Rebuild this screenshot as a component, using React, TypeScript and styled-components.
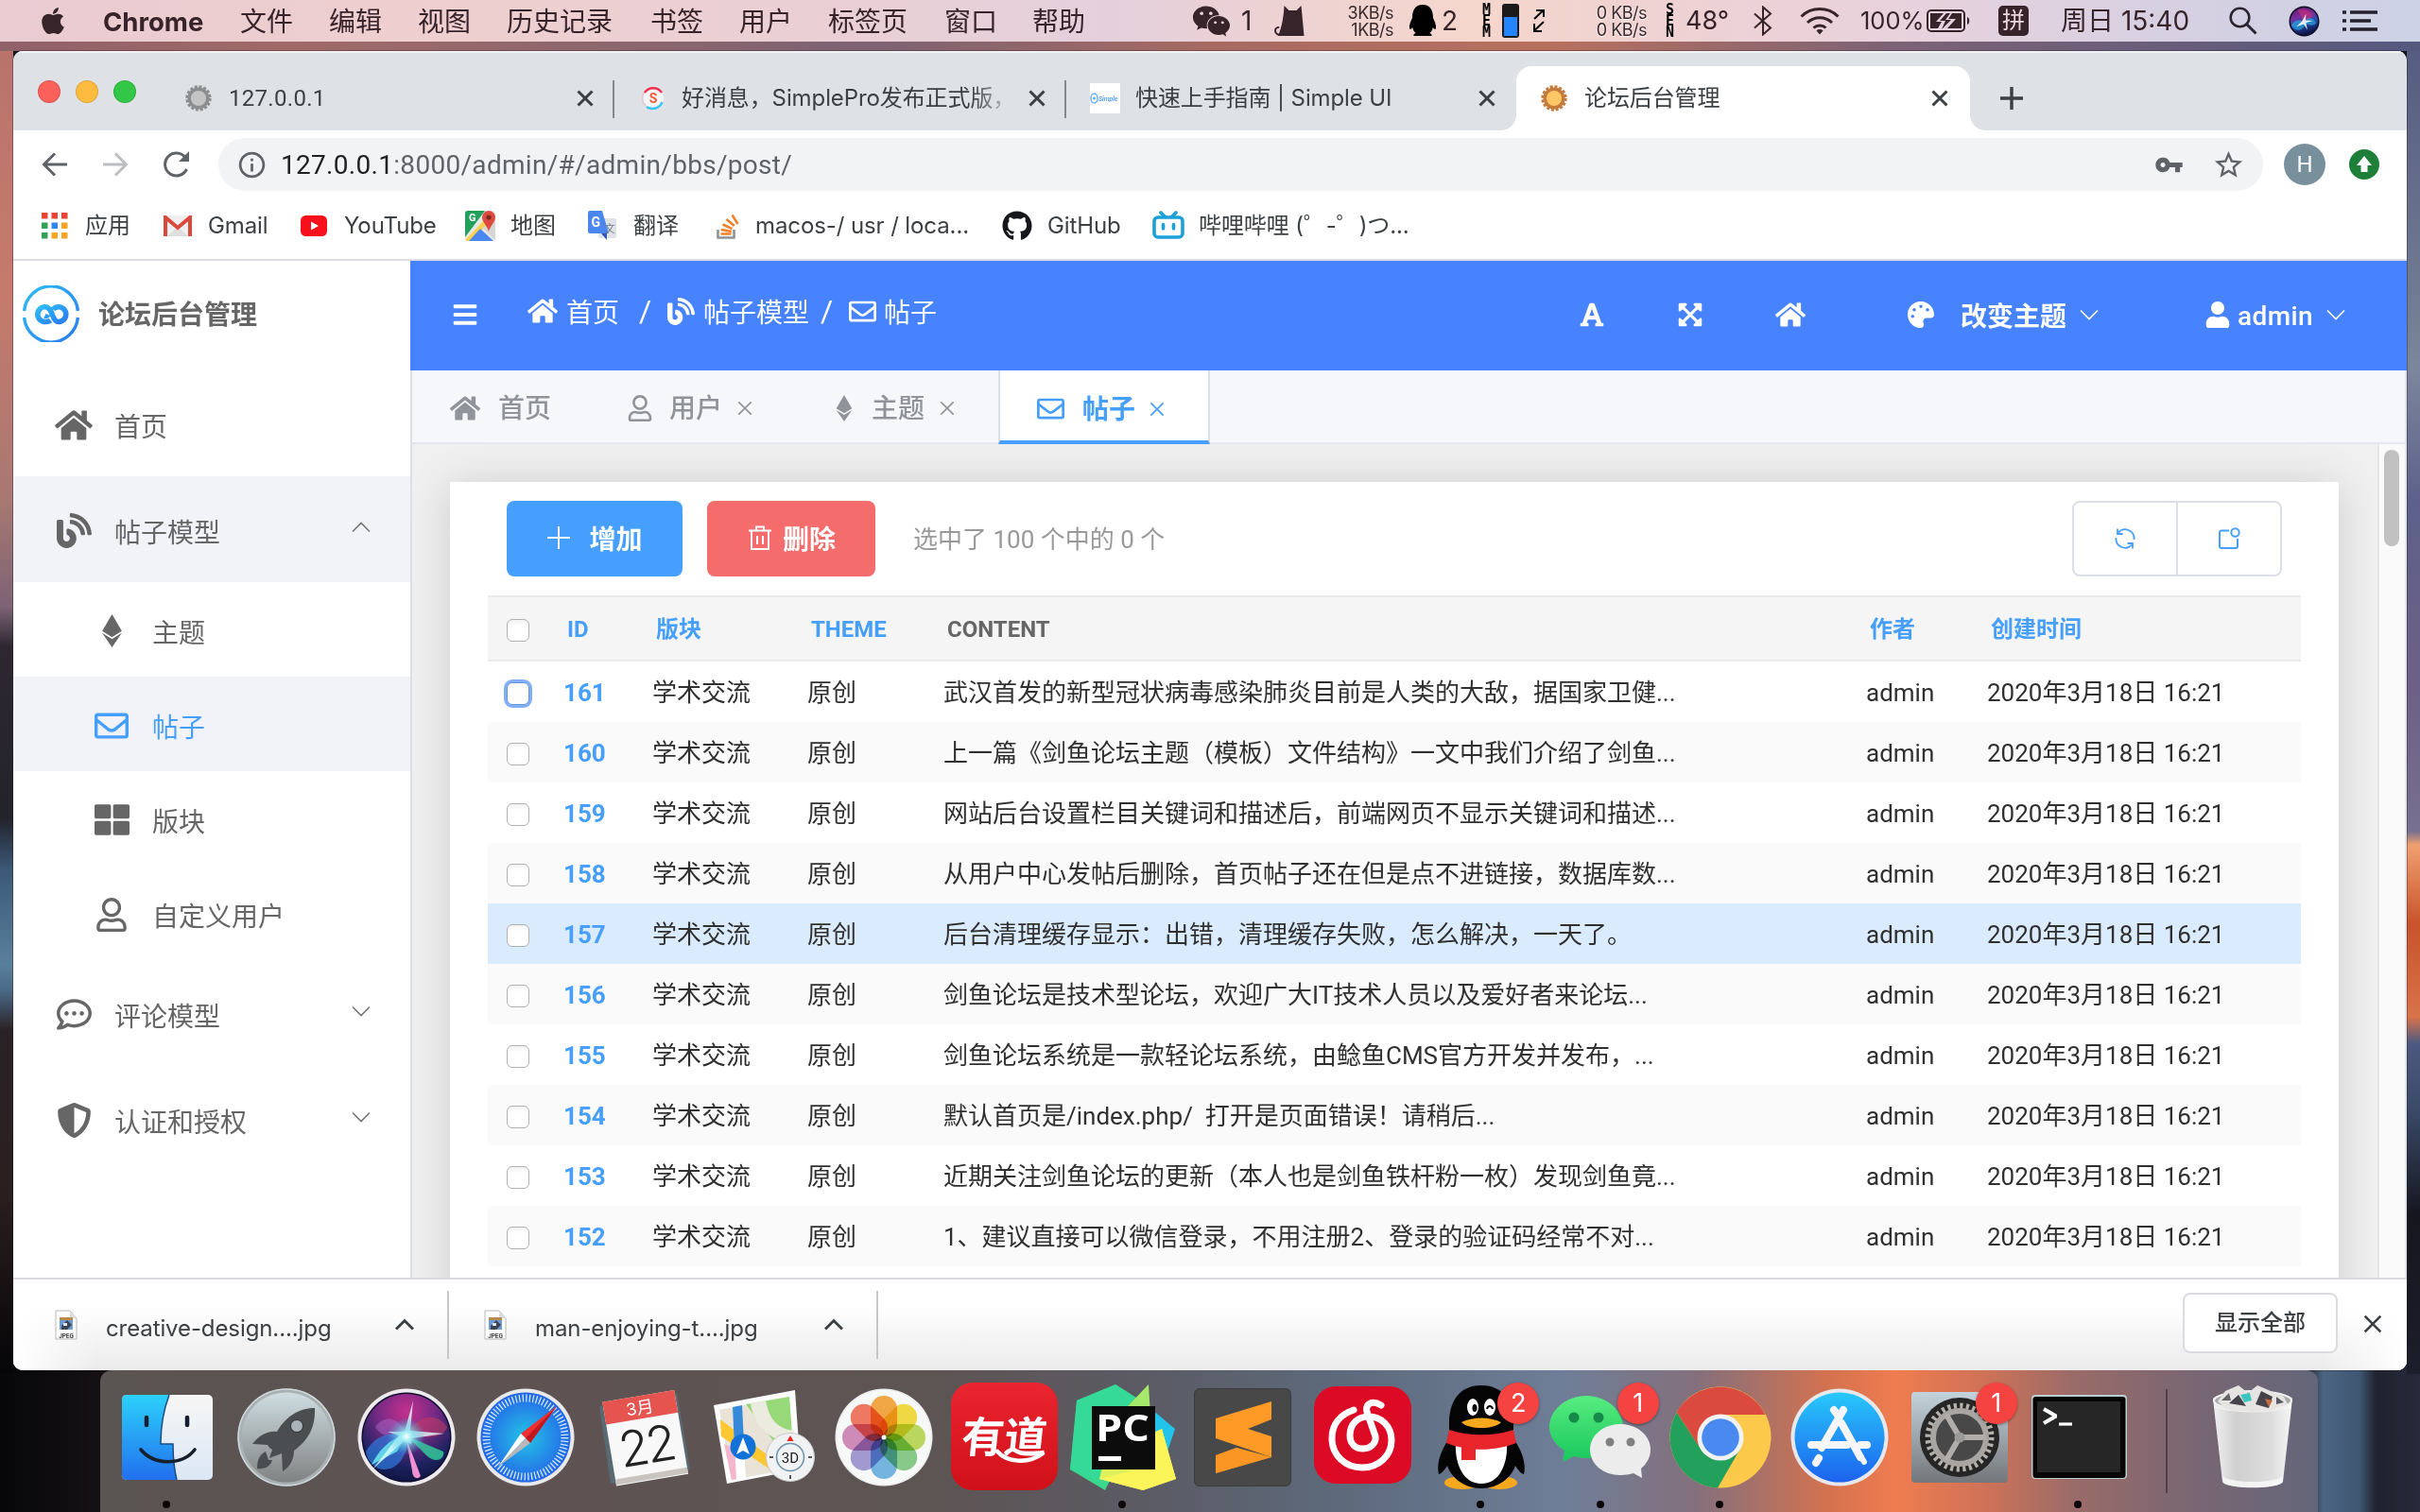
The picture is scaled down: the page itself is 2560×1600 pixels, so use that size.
import React from "react";
import styled, { createGlobalStyle, css } from "styled-components";
import {
  FaApple, FaBars, FaBlog, FaEthereum, FaExpandArrowsAlt, FaFont, FaGithub, FaHome, FaPalette,
  FaRegCommentDots, FaRegEnvelope, FaRegUser, FaShieldAlt, FaThLarge, FaUser, FaWeixin,
} from "react-icons/fa";
import { MdInfoOutline, MdStarBorder, MdVpnKey } from "react-icons/md";

const UI = `Roboto, "Noto Sans CJK SC", sans-serif`;
const SYS = `Inter, "Noto Sans CJK SC", sans-serif`;

const Global = createGlobalStyle`
  * { box-sizing: border-box; }
  body { margin: 0; font-family: ${UI}; overflow: hidden; }
  svg { display: block; flex: none; }
`;

/* ---------- desktop ---------- */

const Desktop = styled.div`
  width: 2560px;
  height: 1600px;
  display: flex;
  flex-direction: column;
  overflow: hidden;
  background:
    linear-gradient(90deg, #8f6068 0, #a06a68 12%, #7d6272 36%, #a66a62 50%, #b8705e 64%, #7d6275 78%, #55597f 100%) 0 0 / 100% 54px no-repeat,
    linear-gradient(180deg, #b9736c 0, #c67a6c 18%, #a87872 34%, #7c6375 42%, #2d2730 45%, #23232c 58%, #3c5a78 62%, #5a7f9c 69%, #4a6a86 71%, #2a2226 74%, #2c1f20 86%, #050507 100%) 0 54px / 14px 1400px no-repeat,
    linear-gradient(180deg, #565c80 0, #6f7a92 18%, #7c869c 24%, #5d618a 34%, #6d5f85 48%, #77708f 59%, #f0a070 60%, #c9532a 66%, #d8734a 73%, #4d5a80 75%, #3a4a68 80%, #16161f 88%, #1c1e2b 100%) 2546px 54px / 14px 1400px no-repeat,
    linear-gradient(90deg, #07070a 0, #141013 4%, #0b0a0d 95%, #4c6582 96%, #3e5672 97.5%, #20222e 98.2%, #262a3a 100%) 0 1440px / 100% 160px no-repeat,
    #14141c;
`;

const MenuBar = styled.header`
  height: 44px;
  flex: none;
  display: flex;
  align-items: center;
  justify-content: space-between;
  color: #37232a;
  font: 400 28px ${SYS};
  white-space: nowrap;
  background: linear-gradient(90deg, #e9cbd1 0, #efcfcf 18%, #e9d0d6 36%, #e4cfdb 46%, #ecd2d4 52%, #f5d6cc 61%, #efd2d2 68%, #e9d2dc 78%, #d6d0e2 90%, #cdd2e6 100%);
`;

const MenuGroup = styled.div<{ $pad?: string }>`
  display: flex;
  align-items: center;
  height: 44px;
  padding: ${(p) => p.$pad ?? "0"};
`;

const MenuItem = styled.span<{ $w: number; $bold?: boolean }>`
  width: ${(p) => p.$w}px;
  flex: none;
  line-height: 44px;
  padding-top: 1px;
  font-weight: ${(p) => (p.$bold ? 700 : 400)};
  font-size: ${(p) => (p.$bold ? 27.5 : 28)}px;
`;

const StatusSlot = styled.span<{ $w: number; $size?: number }>`
  width: ${(p) => p.$w}px;
  flex: none;
  height: 44px;
  display: flex;
  align-items: center;
  font-size: ${(p) => p.$size ?? 28}px;
  line-height: 44px;
`;

const Speed = styled.span<{ $w: number; $shadow?: boolean }>`
  width: ${(p) => p.$w}px;
  flex: none;
  display: grid;
  font-size: 18px;
  line-height: 18px;
  padding-top: 1px;
  color: #3a2a2e;
  text-shadow: ${(p) => (p.$shadow ? "0 1px 2px #fff" : "none")};
  span { width: 60px; text-align: right; letter-spacing: -0.5px; }
`;

const Vertical = styled.span<{ $w: number }>`
  width: ${(p) => p.$w}px;
  flex: none;
  display: grid;
  font: 700 15px/12px "DejaVu Sans Mono", monospace;
  color: #000;
`;

const InputBadge = styled.span`
  width: 32px;
  height: 32px;
  border-radius: 5px;
  background: #37232a;
  color: #ecd5dc;
  display: flex;
  align-items: center;
  justify-content: center;
  font-size: 24px;
  line-height: 32px;
`;

/* ---------- browser window ---------- */

const Window = styled.main`
  margin: 10px 14px 0;
  height: 1396px;
  flex: none;
  display: flex;
  flex-direction: column;
  background: #fff;
  border-radius: 10px;
  overflow: hidden;
  box-shadow: 0 0 0 1px rgba(30, 20, 30, 0.35);
`;

const TabStrip = styled.div`
  height: 84px;
  flex: none;
  display: flex;
  align-items: flex-end;
  background: #dee1e6;
  border-top: 2px solid #f0f2f4;
`;

const Lights = styled.div`
  width: 155px;
  height: 82px;
  display: flex;
  gap: 16px;
  padding: 29px 0 0 26px;
`;

const Light = styled.i<{ $c: string }>`
  width: 24px;
  height: 24px;
  border-radius: 50%;
  background: ${(p) => p.$c};
  box-shadow: inset 0 0 0 1px rgba(0, 0, 0, 0.12);
`;

const Tab = styled.div<{ $active?: boolean; $sep?: boolean; $w: number }>`
  position: relative;
  width: ${(p) => p.$w}px;
  height: 68px;
  flex: none;
  display: flex;
  align-items: center;
  padding: 0 22px 0 25px;
  color: #3c4043;
  font: 400 24px ${SYS};
  letter-spacing: -0.1px;
  ${(p) => p.$sep && css`
    &::after { content: ""; position: absolute; right: 0; top: 15px; width: 2px; height: 40px; background: #85898e; }
  `}
  ${(p) => p.$active && css`
    background: #fff;
    border-radius: 16px 16px 0 0;
    padding: 0 23px 0 24px;
    &::before, &::after {
      content: ""; position: absolute; bottom: 0; width: 16px; height: 16px;
    }
    &::before { left: -16px; background: radial-gradient(circle at 0 0, transparent 15.5px, #fff 16px); }
    &::after { right: -16px; background: radial-gradient(circle at 100% 0, transparent 15.5px, #fff 16px); }
  `}
`;

const TabIcon = styled.span`
  width: 32px;
  flex: none;
  display: flex;
  justify-content: center;
`;

const TabTitle = styled.span<{ $fade?: boolean; $digits?: boolean }>`
  flex: 1;
  margin: 0 10px 0 ${(p) => (p.$fade ? 14 : 16)}px;
  line-height: 40px;
  overflow: hidden;
  white-space: nowrap;
  ${(p) => p.$fade && css`mask-image: linear-gradient(90deg, #000 86%, transparent 99%);`}
  ${(p) => p.$digits && css`font-family: ${UI}; letter-spacing: 0.3px;`}
`;

const NewTab = styled.span`
  height: 68px;
  padding: 0 0 0 32px;
  display: flex;
  align-items: center;
`;

const Toolbar = styled.div`
  height: 72px;
  flex: none;
  display: flex;
  align-items: center;
  padding: 0 20px 0 30px;
`;

const NavButton = styled.span<{ $w: number }>`
  width: ${(p) => p.$w}px;
  flex: none;
  display: flex;
`;

const Omnibox = styled.div`
  width: 2163px;
  height: 56px;
  flex: none;
  border-radius: 28px;
  background: #f1f3f4;
  display: flex;
  align-items: center;
  padding: 0 19px 0 19px;
  color: #5f6368;
  font: 400 28px ${UI};
  letter-spacing: 0.3px;
  svg:first-child { margin-right: 14px; }
`;

const Url = styled.span`
  flex: 1;
  b { font-weight: 400; color: #202124; }
`;

const OmniActions = styled.span`
  display: flex;
  align-items: center;
  svg + svg { margin-left: 30px; }
  svg:first-child { margin-right: 0; }
`;

const Avatar = styled.span`
  margin: 0 25px 0 22px;
  width: 44px;
  height: 44px;
  border-radius: 50%;
  background: #78909c;
  color: #fff;
  font-size: 24px;
  line-height: 45px;
  text-align: center;
`;

const Bookmarks = styled.nav`
  height: 66px;
  flex: none;
  display: flex;
  align-items: center;
  padding: 0 0 7px 30px;
  border-bottom: 2px solid #dcdde2;
  font: 400 24px/32px ${SYS};
  letter-spacing: -0.1px;
  color: #3c4043;
`;

const Bookmark = styled.span<{ $w: number }>`
  width: ${(p) => p.$w}px;
  flex: none;
  display: flex;
  align-items: center;
  white-space: nowrap;
`;

const BookmarkIcon = styled.span<{ $w: number }>`
  width: ${(p) => p.$w}px;
  flex: none;
`;

/* ---------- admin page ---------- */

const Page = styled.div`
  height: 1076px;
  flex: none;
  display: flex;
  overflow: hidden;
`;

const Sidebar = styled.aside`
  width: 420px;
  flex: none;
  background: #fff;
  color: #666;
`;

const Brand = styled.div`
  height: 116px;
  display: flex;
  align-items: center;
  gap: 20px;
  padding: 0 0 4px 10px;
  font-size: 28px;
  font-weight: 700;
  > span { padding-bottom: 3px; }
`;

const NavRow = styled.div<{ $sub?: boolean; $fill?: boolean; $on?: boolean }>`
  height: ${(p) => (p.$sub ? 100 : 112)}px;
  display: flex;
  align-items: center;
  padding: 3px 42px 0 ${(p) => (p.$sub ? 80 : 40)}px;
  background: ${(p) => (p.$fill ? "#f1f3f8" : "transparent")};
  color: ${(p) => (p.$on ? "#469ffc" : "#666")};
  font-size: 28px;
`;

const NavIcon = styled.span`
  width: 48px;
  flex: none;
  display: flex;
  justify-content: center;
`;

const NavLabel = styled.span`
  flex: 1;
  padding: 1px 0 0 19px;
`;

const NavArrow = styled.span`
  padding-bottom: 8px;
  color: #777;
`;

const Content = styled.section`
  flex: 1;
  min-width: 0;
  display: flex;
  flex-direction: column;
`;

const TopBar = styled.div`
  height: 116px;
  flex: none;
  display: flex;
  align-items: center;
  justify-content: space-between;
  padding: 0 61px 2px 44px;
  background: #4783fe;
  color: #fff;
  font-size: 28px;
`;

const Crumbs = styled.div`
  display: flex;
  align-items: center;
  padding-bottom: 8px;
`;

const Burger = styled.span`
  width: 80px;
  padding-top: 8px;
`;

const Crumb = styled.span<{ $w: number; $icon: number }>`
  width: ${(p) => p.$w}px;
  flex: none;
  display: flex;
  align-items: center;
  white-space: nowrap;
  svg { margin-right: ${(p) => p.$icon}px; }
`;

const Slash = styled.span<{ $w: number }>`
  width: ${(p) => p.$w}px;
  flex: none;
  font-size: 32px;
`;

const Actions = styled.div`
  display: flex;
  align-items: center;
  font-weight: 700;
`;

const Action = styled.span<{ $w: number; $gap?: number }>`
  width: ${(p) => p.$w}px;
  flex: none;
  display: flex;
  align-items: center;
  gap: ${(p) => p.$gap ?? 0}px;
  white-space: nowrap;
`;

const ThemeLabel = styled.span`
  margin-left: 14px;
`;

const UserName = styled.span`
  font-weight: 500;
  letter-spacing: 0.4px;
  margin-right: 7px;
  padding-top: 2px;
`;

const PageTabs = styled.div`
  height: 78px;
  flex: none;
  display: flex;
  background: #f5f7fb;
  border-left: 2px solid #dcdfe6;
  border-right: 2px solid #dfe3ea;
  border-bottom: 2px solid #e4e7ed;
  color: #909399;
  font-size: 28px;
`;

const PageTab = styled.div<{ $w: number; $pad: number; $gap: number; $active?: boolean }>`
  width: ${(p) => p.$w}px;
  height: ${(p) => (p.$active ? 78 : 76)}px;
  display: flex;
  align-items: center;
  padding: 4px 0 0 ${(p) => p.$pad}px;
  font-weight: 500;
  > span { margin-left: ${(p) => p.$gap}px; padding-bottom: 4px; }
  > svg:last-child { margin: 0 0 0 16px; }
  ${(p) => p.$active && css`
    color: #469ffc;
    background: #fff;
    font-weight: 700;
    padding-top: 7px;
    border: solid #dcdfe6;
    border-width: 0 2px;
    border-bottom: 4px solid #469ffc;
    > svg:last-child { margin-left: 15px; }
  `}
`;

const Scroller = styled.div`
  flex: 1;
  min-height: 0;
  display: flex;
  background: #f0f0f0;
  border-left: 2px solid #dcdfe6;
`;

const Viewport = styled.div`
  flex: 1;
  height: 882px;
  padding: 40px 41px 0 40px;
  overflow: hidden;
`;

const Track = styled.div`
  width: 31px;
  background: #fafafa;
  border-left: 2px solid #e5e5e5;
  border-right: 2px solid #e2e4ea;
  padding: 6px 0 0 5px;
`;

const Thumb = styled.div`
  width: 16px;
  height: 102px;
  border-radius: 8px;
  background: #c1c1c1;
`;

const Card = styled.div`
  height: 1000px;
  background: #fff;
  padding: 20px 40px 0;
  box-shadow: 0 4px 44px rgba(0, 0, 0, 0.15);
`;

const ActionRow = styled.div`
  height: 80px;
  display: flex;
  align-items: center;
  padding: 0 20px;
`;

const Button = styled.button<{ $c: string; $w: number; $gap: number }>`
  width: ${(p) => p.$w}px;
  height: 80px;
  border: 0;
  border-radius: 8px;
  margin-right: 26px;
  padding: 0 0 2px 1px;
  background: ${(p) => p.$c};
  color: #fff;
  font: 700 28px ${UI};
  display: flex;
  align-items: center;
  justify-content: center;
  gap: ${(p) => p.$gap}px;
`;

const Selected = styled.span`
  flex: 1;
  margin-left: 14px;
  font-size: 26px;
  line-height: 32px;
  padding-top: 1px;
  color: #999;
`;

const ButtonGroup = styled.div`
  width: 222px;
  height: 80px;
  display: flex;
  border: 2px solid #dcdfe6;
  border-radius: 8px;
  color: #469ffc;
  span {
    flex: 1;
    display: flex;
    align-items: center;
    justify-content: center;
  }
  span + span { border-left: 2px solid #dcdfe6; }
`;

const Table = styled.div`
  margin-top: 20px;
`;

const Row = styled.div<{ $bg: string; $head?: boolean }>`
  display: grid;
  grid-template-columns: 80px 94px 164px 144px 976px 128px 1fr;
  align-items: center;
  height: ${(p) => (p.$head ? 70 : 64)}px;
  background: ${(p) => p.$bg};
  color: #303030;
  font-size: 26px;
  line-height: 32px;
  white-space: pre;
  > span { padding-top: 2px; }
  ${(p) => p.$head && css`
    border: solid #eaeaea;
    border-width: 2px 0;
    font-size: 24px;
    font-weight: 700;
    color: #666;
    > span { padding-left: 4px; }
  `}
`;

const Link = styled.span`
  color: #469ffc;
  font-weight: 700;
`;

const Check = styled.i<{ $focus?: boolean }>`
  width: 24px;
  height: 24px;
  margin: 3px 0 0 20px;
  border-radius: 6px;
  border: 1.5px solid #b0b0b0;
  background: linear-gradient(#f2f2f2, #fff 30%);
  ${(p) => p.$focus && css`
    border-color: #6c93d6;
    background: #fff;
    box-shadow: 0 0 0 3px #82b0f8;
  `}
`;

/* ---------- downloads ---------- */

const Downloads = styled.footer`
  height: 98px;
  flex: none;
  display: flex;
  align-items: center;
  border-top: 2px solid #d9d9de;
  background:
    linear-gradient(90deg, #fff 0, rgba(255,255,255,0) 90px, rgba(255,255,255,0) 2440px, #fff 100%),
    linear-gradient(180deg, #fff 30%, #f4f4f4 65%, #ebebeb 100%);
  font: 400 24px ${SYS};
  color: #3c4043;
`;

const Download = styled.div<{ $pad: number; $w: number }>`
  width: ${(p) => p.$w}px;
  height: 72px;
  display: flex;
  align-items: center;
  padding: 0 35px 1px ${(p) => p.$pad}px;
  border-right: 2px solid #c6c6c8;
  letter-spacing: -0.1px;
  > span { flex: 1; padding: 8px 0 0 30px; white-space: nowrap; }
`;

const ShowAll = styled.span`
  margin-left: auto;
  width: 164px;
  height: 64px;
  margin-top: -4px;
  border: 2px solid #dadce0;
  border-radius: 8px;
  background: #fff;
  font: 500 24px/60px ${UI};
  text-align: center;
`;

const CloseShelf = styled.span`
  padding: 0 26px 3px 27px;
`;

/* ---------- dock ---------- */

const Dock = styled.div`
  margin: 0 108px 0 106px;
  height: 150px;
  flex: none;
  display: flex;
  padding-left: 8px;
  border-radius: 12px 12px 0 0;
  background:
    linear-gradient(90deg, #5a5453 0, #5e5352 20%, #5d5454 38%, #5b5c66 48%, #5d6a7c 56%, #6f7e98 66%, #84707c 72%, #d5724f 78%, #ef7c50 81%, #cf7257 85%, #9a6b68 89%, #7b6672 94%, #63667a 100%);
`;

const DockSlot = styled.div<{ $w?: number }>`
  position: relative;
  width: ${(p) => p.$w ?? 126.4}px;
  height: 150px;
  flex: none;
`;

const Running = styled.i`
  position: absolute;
  left: 58px;
  top: 138px;
  width: 8px;
  height: 8px;
  border-radius: 50%;
  background: #0a0406;
`;

const Badge = styled.b`
  position: absolute;
  left: 80px;
  top: 13px;
  width: 44px;
  height: 44px;
  border-radius: 50%;
  background: #f44340;
  box-shadow: 0 1px 3px rgba(0, 0, 0, 0.4);
  color: #fff;
  font: 400 27px/44px ${SYS};
  text-align: center;
`;

const Divider = styled.i`
  width: 2px;
  height: 110px;
  margin: 20px 27px 0 28px;
  background: rgba(50, 35, 45, 0.6);
`;

/* ---------- small drawings ---------- */

const Cross = ({ s = 18, w = 3, c = "currentColor" }: { s?: number; w?: number; c?: string }) => (
  <svg width={s} height={s} viewBox="0 0 18 18" stroke={c} strokeWidth={w} fill="none"><path d="M1.5 1.5l15 15M16.5 1.5l-15 15" /></svg>
);

const Chevron = ({ up, w = 1.6, s = 20 }: { up?: boolean; w?: number; s?: number }) => (
  <svg width={s} height={s} viewBox="0 0 20 20" fill="none" stroke="currentColor" strokeWidth={w}>
    <path d={up ? "M1 14.5L10 5.5l9 9" : "M1 5.5l9 9 9-9"} />
  </svg>
);

const Gear = ({ ring, fill }: { ring: string; fill: string }) => (
  <svg width="30" height="30" viewBox="0 0 30 30">
    <circle cx="15" cy="15" r="12.2" fill="none" stroke={ring} strokeWidth="3" strokeDasharray="3 1.8" />
    <circle cx="15" cy="15" r="9.8" fill={fill} stroke={ring} strokeWidth="3.4" />
  </svg>
);

const Logo = () => (
  <svg width="60" height="60" viewBox="0 0 60 60" fill="none">
    <defs><linearGradient id="lg" x1="0" y1="0" x2="1" y2="1"><stop offset="0" stopColor="#2fbdf5" /><stop offset="1" stopColor="#2a7bf0" /></linearGradient></defs>
    <path d="M1.6 27a28.5 28.5 0 0 1 56.8 0M58.4 34a28.5 28.5 0 0 1-56.8 0" stroke="url(#lg)" strokeWidth="3.4" />
    <path d="M29.500 37C28 38.200 26 38.700 23.700 38.500a7.900 7.900 0 1 1 0-15.800c4.300 0 6 3.500 7.500 7.900s3.200 7.900 6.700 7.900a7.900 7.900 0 0 0 0-15.800c-2.600 0-4.600 1.100-5.800 2.800M23.500 32c1.200.6 2.600.2 3.200-1.200" stroke="url(#lg)" strokeWidth="5.600" />
  </svg>
);

const Jpeg = () => (
  <svg width="24" height="32" viewBox="0 0 24 32">
    <path d="M1 1h15l7 8v22H1z" fill="#fdfdfd" stroke="#b8b8b8" />
    <path d="M16 1v8h7z" fill="#ddd" />
    <rect x="5" y="8" width="14" height="13" fill="#6d9bd6" />
    <path d="M5 8h14v3H5z" fill="#b98a4e" /><path d="M7 17l6-6 5 5-5 5H7z" fill="#3c4250" /><path d="M9 14h4v3H9z" fill="#d4e4f4" />
    <text x="12" y="29.500" fontSize="6.500" fontWeight="700" textAnchor="middle" fill="#444" fontFamily="Roboto">JPEG</text>
  </svg>
);

const SiriBall = ({ size }: { size: number }) => (
  <svg width={size} height={size} viewBox="0 0 34 34">
    <defs>
      <linearGradient id="sb" x1="0" y1="0" x2=".3" y2="1"><stop offset="0" stopColor="#5a1c6c" /><stop offset=".4" stopColor="#7a2c9c" /><stop offset=".65" stopColor="#2450b0" /><stop offset="1" stopColor="#101850" /></linearGradient>
    </defs>
    <circle cx="17" cy="17" r="16.500" fill="#0c0a20" /><circle cx="17" cy="17" r="15" fill="url(#sb)" />
    <path d="M10 5c6-3 14 0 17 6-4 4-9 5-11 5z" fill="#c0307c" opacity=".7" />
    <path d="M3 22c4-8 8-6 14-5 6-6 10-4 13 2-4 4-8 2-12 0 0 6-8 12-15 3z" fill="#2fb4e4" opacity=".6" />
    <path d="M19 9l-.5 7 8 .5-7.500 2 1.500 8-4-6.500-8 3 6-6z" fill="#fff" opacity=".85" />
  </svg>
);

const bookmarkIcons = {
  apps: (
    <svg width="28" height="28" viewBox="0 0 28 28">
      {["#ea4335", "#ea4335", "#ea4335", "#34a05a", "#2f86f0", "#f5a623", "#34a05a", "#f5a623", "#f5a623"].map((c, i) => (
        <rect key={i} x={(i % 3) * 10.5} y={Math.floor(i / 3) * 10.500} width="6.500" height="6.500" fill={c} />
      ))}
    </svg>
  ),
  gmail: (
    <svg width="30" height="22" viewBox="0 0 30 22">
      <rect width="30" height="22" rx="2" fill="#efefef" /><path d="M4 22l11-10 11 10z" fill="#dedede" />
      <path d="M2 22V2l13 11L28 2v20" fill="none" stroke="#d94a3d" strokeWidth="4" />
    </svg>
  ),
  youtube: (
    <svg width="28" height="22" viewBox="0 0 28 22"><rect width="28" height="22" rx="5.500" fill="#f8101c" /><path d="M11 6.500v9l8-4.500z" fill="#fff" /></svg>
  ),
  maps: (
    <svg width="32" height="32" viewBox="0 0 32 32">
      <rect width="32" height="32" rx="3" fill="#e8e8e8" /><path d="M0 3a3 3 0 0 1 3-3h18L0 28z" fill="#23a05c" />
      <path d="M0 31L22 8l4 4L6 32H2z" fill="#fbd24c" /><path d="M4 32l12-13 14 13z" fill="#4a87f0" /><path d="M18 18l14 13V10z" fill="#d6d6d6" />
      <path d="M25 0a7 7 0 0 1 7 7c0 5-5 8-7 15-2-7-7-10-7-15a7 7 0 0 1 7-7z" fill="#dd4b3e" /><circle cx="25" cy="7" r="2.600" fill="#7c2b24" />
      <text x="4" y="11" fontSize="11" fontWeight="700" fill="#fff" fontFamily="Roboto">G</text>
    </svg>
  ),
  translate: (
    <svg width="31" height="31" viewBox="0 0 31 31">
      <rect x="11" y="8" width="19" height="21" rx="2" fill="#dfe2e6" /><path d="M14 24l6 7 0-7z" fill="#3057b5" />
      <path d="M2 0h13l7 24H2a2 2 0 0 1-2-2V2a2 2 0 0 1 2-2z" fill="#4b86ee" />
      <text x="3.500" y="17" fontSize="14" fontWeight="700" fill="#fff" fontFamily="Roboto">G</text>
      <text x="17.500" y="23" fontSize="11" fill="#6b7784" fontFamily="Noto Sans CJK SC">文</text>
    </svg>
  ),
  stack: (
    <svg width="24" height="28" viewBox="0 0 24 28" fill="none" strokeWidth="2.600">
      <path d="M1.500 18v8.500h17V18" stroke="#8f9499" /><path d="M4.500 22.500h11M4.800 18l11 2M6.500 12.500l10 4.600M10.500 7l8.300 7M16.500 2.500l6 9.500" stroke="#f0802a" />
    </svg>
  ),
  bili: (
    <svg width="34" height="32" viewBox="0 0 34 32" fill="none" stroke="#1ba0da" strokeWidth="3.600" strokeLinecap="round">
      <rect x="2" y="7" width="30" height="21" rx="4" /><path d="M9 2l4.500 4.500M25 2l-4.500 4.500M11.500 14.500v4.500M22.500 14.500v4.500" />
    </svg>
  ),
};

/* ---------- data ---------- */

const rows: [number, string][] = [
  [161, "武汉首发的新型冠状病毒感染肺炎目前是人类的大敌，据国家卫健..."],
  [160, "上一篇《剑鱼论坛主题（模板）文件结构》一文中我们介绍了剑鱼..."],
  [159, "网站后台设置栏目关键词和描述后，前端网页不显示关键词和描述..."],
  [158, "从用户中心发帖后删除，首页帖子还在但是点不进链接，数据库数..."],
  [157, "后台清理缓存显示：出错，清理缓存失败，怎么解决，一天了。"],
  [156, "剑鱼论坛是技术型论坛，欢迎广大IT技术人员以及爱好者来论坛..."],
  [155, "剑鱼论坛系统是一款轻论坛系统，由鲶鱼CMS官方开发并发布，..."],
  [154, "默认首页是/index.php/  打开是页面错误！请稍后..."],
  [153, "近期关注剑鱼论坛的更新（本人也是剑鱼铁杆粉一枚）发现剑鱼竟..."],
  [152, "1、建议直接可以微信登录，不用注册2、登录的验证码经常不对..."],
];

const menus: [string, number][] = [
  ["文件", 94], ["编辑", 94], ["视图", 94], ["历史记录", 152], ["书签", 94], ["用户", 94], ["标签页", 123], ["窗口", 93], ["帮助", 60],
];

/* ---------- dock drawings ---------- */

const Art = ({ children }: { children: React.ReactNode }) => (
  <svg width="126" height="150" viewBox="0 0 126 150">{children}</svg>
);

const Finder = () => (
  <Art>
    <defs>
      <linearGradient id="f1" x1="0" y1="0" x2="0" y2="1"><stop offset="0" stopColor="#2cd0fb" /><stop offset="1" stopColor="#2270ee" /></linearGradient>
      <linearGradient id="f2" x1="0" y1="0" x2="0" y2="1"><stop offset="0" stopColor="#f7f6f6" /><stop offset="1" stopColor="#dbe7f5" /></linearGradient>
    </defs>
    <rect x="15" y="26" width="96" height="90" rx="5" fill="url(#f2)" />
    <path d="M20 26h45c-6 16-9 32-9 52h13c0 13 1 26 4 38H20a5 5 0 0 1-5-5V31a5 5 0 0 1 5-5z" fill="url(#f1)" />
    <path d="M65 26c-6 16-9 32-9 52h13c0 13 1 26 4 38" fill="none" stroke="#1b4d80" strokeWidth="1.500" />
    <path d="M41 50v8M84 50v8" stroke="#16202c" strokeWidth="4.500" strokeLinecap="round" />
    <path d="M35 84c14 17 44 17 57 0" fill="none" stroke="#16202c" strokeWidth="3.600" strokeLinecap="round" />
  </Art>
);

const Launchpad = () => (
  <Art>
    <defs><linearGradient id="l1" x1="0" y1="0" x2="0" y2="1"><stop offset="0" stopColor="#cfdde2" /><stop offset="1" stopColor="#808282" /></linearGradient></defs>
    <circle cx="63" cy="71" r="51.500" fill="#a9b0b2" /><circle cx="63" cy="71" r="51" fill="none" stroke="#cfd9dc" strokeWidth="1.500" />
    <circle cx="63" cy="71" r="47.500" fill="url(#l1)" />
    <path d="M93 40c-18 0-31 10-40 25-10-1-19 4-26 13l16 1c1 2 3 4 5 5l-3 9 13-5 1 19c8-5 12-13 12-22 14-10 23-24 22-45z" fill="#4a4e51" />
    <path d="M41 86c-6 3-9 8-9 18 8 1 14-2 16-9l-4 0z" fill="#4a4e51" />
    <circle cx="74" cy="59" r="6.500" fill="#aab4b8" stroke="#2e3234" />
  </Art>
);

const Siri = () => (
  <Art>
    <defs>
      <radialGradient id="s1" cx=".5" cy=".2" r=".9"><stop offset="0" stopColor="#c4308c" /><stop offset=".35" stopColor="#7a2a86" /><stop offset=".7" stopColor="#1c2260" /><stop offset="1" stopColor="#0a1030" /></radialGradient>
      <radialGradient id="s2"><stop offset="0" stopColor="#fff" /><stop offset=".25" stopColor="#9ff0f4" stopOpacity=".9" /><stop offset="1" stopColor="#28b4dc" stopOpacity="0" /></radialGradient>
    </defs>
    <circle cx="63" cy="71" r="51.500" fill="#eceaec" /><circle cx="63" cy="71" r="47.500" fill="#120c30" /><circle cx="63" cy="71" r="46" fill="url(#s1)" />
    <path d="M63 68c10-18 30-26 43-8-2 10-20 14-43 8z" fill="#c43c62" opacity=".55" />
    <path d="M30 60c10-14 26-10 33 8-12 4-26 4-33-8z" fill="#b070d0" opacity=".45" />
    <path d="M20 86c10-18 28-22 43-16 4 14-8 40-30 34-8-5-12-10-13-18z" fill="#2f7ae0" opacity=".7" />
    <path d="M26 100c8-16 20-28 37-32l-10 18z" fill="#6ef0f0" opacity=".8" />
    <path d="M64 70l38 16c2 10-10 12-18 4z" fill="#35c89a" opacity=".85" /><path d="M62 70l16 42c-4 5-9 1-9-6z" fill="#f090d0" />
    <path d="M70 32l-3 32 36 3-34 5-1 6-8-3-33 30 28-36-12-4 18 0z" fill="#dffcff" opacity=".8" />
    <circle cx="63" cy="70" r="20" fill="url(#s2)" />
  </Art>
);

const Safari = () => (
  <Art>
    <defs><radialGradient id="sf"><stop offset="0" stopColor="#24c4e6" /><stop offset="1" stopColor="#2466e8" /></radialGradient></defs>
    <circle cx="63" cy="71" r="51.500" fill="#e9e9ea" /><circle cx="63" cy="71" r="47.500" fill="url(#sf)" />
    <circle cx="63" cy="71" r="41.500" fill="none" stroke="#cfe8fb" strokeWidth="8" strokeDasharray="1.300 2.320" />
    <g transform="translate(1 0)">
      <path d="M95 38L67 77l-10-10z" fill="#ee3030" /><path d="M95 38L67 77l-5-5z" fill="#c01820" />
      <path d="M33 102l24-35 5 5z" fill="#fff" /><path d="M33 102l29-30 5 5z" fill="#b8b8b8" />
    </g>
  </Art>
);

const Calendar = () => (
  <Art>
    <path d="M14 38l82-14 14 81-84 15z" fill="#5a6a72" />
    <g transform="rotate(-9.500 61 71)">
      <rect x="24" y="27" width="77" height="90" fill="#f8f8f8" /><rect x="24" y="110" width="77" height="6" fill="#c9c4c0" />
      <rect x="24" y="27" width="77" height="24" fill="#e65450" />
      <text x="62" y="46" fontSize="18" fill="#fff" textAnchor="middle" fontFamily="Inter, Noto Sans CJK SC">3月</text>
      <text x="62" y="99" fontSize="52" fill="#222" textAnchor="middle" fontWeight="300" letterSpacing="-3" fontFamily="Inter">22</text>
    </g>
  </Art>
);

const Maps = () => (
  <Art>
    <path d="M9 37l86-16 6 84-78 15z" fill="#fbfbfb" />
    <path d="M15 42l74-14 5 76-66 12z" fill="#e9e2d6" />
    <path d="M43 36l46-8 3 40-16 12z" fill="#97d878" /><path d="M48 35l16-3c4 22 14 30 30 32v14C68 74 52 60 48 35z" fill="#ecebe0" />
    <path d="M16 52l66 50v12L17 70z" fill="#fcc730" /><path d="M20 78l18 8 2 28-12 2z" fill="#f4b6cc" />
    <path d="M29 39l9-2 5 77-10 2z" fill="#fff" /><path d="M29 39l10-2 2 40-10 6z" fill="#3688d8" />
    <circle cx="40" cy="81" r="13.500" fill="#1372d8" /><path d="M40 71l7 18-7-4-7 4z" fill="#fff" />
    <circle cx="90" cy="92" r="25.500" fill="#f1f2f3" stroke="#c8c8ca" /><circle cx="90" cy="92" r="14.500" fill="none" stroke="#6f93ac" strokeWidth="1.600" />
    <path d="M90 69l3.500 6h-7z" fill="#f02020" /><path d="M68 92h4M109 92h4M90 111v4" stroke="#222" strokeWidth="1.500" />
    <text x="90" y="97.500" textAnchor="middle" fontSize="15" fill="#222" fontFamily="Roboto">3D</text>
  </Art>
);

const Photos = () => (
  <Art>
    <circle cx="63" cy="71" r="51.500" fill="#ececec" /><circle cx="63" cy="71" r="50" fill="#f7f8f8" />
    {["#f7a02c", "#f5dc2c", "#b8d84c", "#7cc87c", "#68b0e4", "#9a90d0", "#d080b4", "#f46a50"].map((c, i) => (
      <rect key={i} x="49" y="27" width="28" height="44" rx="14" fill={c} opacity=".88" transform={`rotate(${i * 45} 63 71)`} style={{ mixBlendMode: "multiply" }} />
    ))}
    <circle cx="63" cy="71" r="2.500" fill="#fff" />
  </Art>
);

const Youdao = () => (
  <Art>
    <defs><linearGradient id="yd" x1="0" y1="0" x2="0" y2="1"><stop offset="0" stopColor="#ea2530" /><stop offset="1" stopColor="#d01018" /></linearGradient></defs>
    <rect x="7" y="13" width="113" height="114" rx="23" fill="url(#yd)" />
    <text x="63" y="87" fontSize="45" fontWeight="700" fill="#fff" textAnchor="middle" transform="skewX(-6) translate(8 0)" fontFamily="Noto Sans CJK SC">有道</text>
    <path d="M56 86c10 11 32 14 48 2" fill="none" stroke="#fff" strokeWidth="4.500" strokeLinecap="round" />
  </Art>
);

const PyCharm = () => (
  <Art>
    <path d="M55 15l22 14-14 60-19 38L7 105l7-73z" fill="#3bd88c" /><path d="M55 15l22 14-40 30 3 60L7 105l7-73z" fill="#34dca0" opacity=".6" />
    <path d="M68 38L90 15l3 50-24-8z" fill="#a6e86a" /><path d="M94 42l24 20-10 30-12-18z" fill="#22c4ec" />
    <path d="M104 62l15 53-35 12-46-12 8-28z" fill="#fcf55a" /><path d="M38 115l6-30 60-10-28 40z" fill="#c8ef5c" opacity=".6" /><path d="M104 62l15 53-35 12-46-12 40-10z" fill="#fcf55a" />
    <rect x="30" y="38" width="67" height="67" fill="#0c0c0c" /><rect x="37" y="91" width="24" height="5" fill="#fff" />
    <text x="34" y="75" fontSize="40" fontWeight="700" fill="#fff" textLength="57" lengthAdjust="spacingAndGlyphs" fontFamily="Open Sans">PC</text>
  </Art>
);

const Sublime = () => (
  <Art>
    <rect x="11" y="19" width="103" height="104" rx="6" fill="#484848" /><rect x="11.500" y="19.500" width="102" height="103" rx="6" fill="none" stroke="#3c3c3c" />
    <path d="M34 90l22-8 37 10-59 17z" fill="#f08e22" />
    <path d="M34 51l59-18v19L68 62l25 8v22L34 72z" fill="#ff9a26" />
    <path d="M34 90l22-8 20 5.500L93 92l-59 17z" fill="#ff9a26" opacity=".7" />
  </Art>
);

const Netease = () => (
  <Art>
    <rect x="12" y="17" width="103" height="103" rx="23" fill="#dc0a24" />
    <path d="M54 42C39 47 31 58 31 72c0 18 14 31 32 31s31-13 31-29c0-15-11-25-24-25-12 0-20 8-20 20 0 9 6 14 14 14s14-6 13-13L68 44c-2-8 5-13 15-7" fill="none" stroke="#fff" strokeWidth="7" strokeLinecap="round" strokeLinejoin="round" />
  </Art>
);

const QQ = () => (
  <Art>
    <ellipse cx="43" cy="119" rx="19" ry="7" fill="#f8a81c" /><ellipse cx="82" cy="119" rx="19" ry="7" fill="#f8a81c" />
    <path d="M63 16c-24 0-34 18-34 40v16c-8 12-14 26-11 38 2 0 6-4 9-9 4 12 17 24 36 24s32-12 36-24c3 5 7 9 9 9 3-12-3-26-11-38V56c0-22-10-40-34-40z" fill="#050505" />
    <path d="M37 70h52c4 18-2 50-26 50S33 88 37 70z" fill="#fff" />
    <path d="M29 63c20 7 48 7 68 0l3 14c-22 9-52 9-74 0z" fill="#e8252a" /><path d="M42 80l15 2v13l-15 0z" fill="#e8252a" />
    <ellipse cx="54" cy="39" rx="6" ry="9" fill="#fff" /><ellipse cx="72" cy="39" rx="6" ry="9" fill="#fff" /><ellipse cx="56" cy="40" rx="2.500" ry="4" /><path d="M69 41c1-4 5-4 6 0" fill="none" stroke="#000" strokeWidth="2" />
    <path d="M42 55c12-6 30-6 42 0-8 8-34 8-42 0z" fill="#f8a81c" />
  </Art>
);

const WeChat = () => (
  <Art>
    <defs><linearGradient id="wc" x1="0" y1="0" x2="0" y2="1"><stop offset="0" stopColor="#58ec80" /><stop offset="1" stopColor="#18c85c" /></linearGradient></defs>
    <g transform="translate(-2 0)">
      <path d="M49 27c21 0 39 15 39 33S70 93 49 93c-5 0-9-1-13-2l-12 6 2-12C16 79 10 70 10 60c0-18 18-33 39-33z" fill="url(#wc)" />
      <circle cx="36" cy="50" r="5.500" fill="#168a48" /><circle cx="62" cy="50" r="5.500" fill="#168a48" />
      <path d="M85 57c18 0 32 12 32 27 0 8-4 15-10 20l1 10-9-5c-4 1-9 2-14 2-18 0-32-12-32-27s14-27 32-27z" fill="#ececec" />
      <circle cx="74" cy="76" r="4.500" fill="#808080" /><circle cx="96" cy="76" r="4.500" fill="#808080" />
    </g>
  </Art>
);

const ChromeIcon = () => (
  <Art>
    <circle cx="63" cy="71" r="53.500" fill="#fcc94a" />
    <path d="M63 71l21 12-24 41.400A53.500 53.500 0 0 1 16.700 44.300L42 83z" fill="#22a05c" />
    <path d="M63 47h47.500a53.500 53.500 0 0 0-93.800-2.700L42 83z" fill="#db4a3f" />
    <circle cx="63" cy="71" r="24.500" fill="#f2f2f2" /><circle cx="63" cy="71" r="19.800" fill="#4a8af0" />
  </Art>
);

const AppStore = () => (
  <Art>
    <defs><linearGradient id="as" x1="0" y1="0" x2="0" y2="1"><stop offset="0" stopColor="#28c8fb" /><stop offset="1" stopColor="#1c62ee" /></linearGradient></defs>
    <circle cx="63" cy="71" r="51.500" fill="#e8e8ec" /><circle cx="63" cy="71" r="47.500" fill="url(#as)" />
    <path d="M58 42l5 7M68 42L45 82M34 79h38M66 56l20 36M86 79h7M42 93l-3 5" transform="translate(-1 0)" stroke="#f6f6f8" strokeWidth="8" strokeLinecap="round" fill="none" />
    <path d="M86 92l3 5" stroke="#f6f6f8" strokeWidth="6" strokeLinecap="round" />
  </Art>
);

const Prefs = () => (
  <Art>
    <defs><linearGradient id="pf" x1="0" y1="0" x2="0" y2="1"><stop offset="0" stopColor="#c4d4dc" /><stop offset="1" stopColor="#74767a" /></linearGradient></defs>
    <rect x="12" y="23" width="102" height="96" rx="4" fill="url(#pf)" />
    <circle cx="63" cy="71" r="42" fill="#262626" /><circle cx="63" cy="71" r="33.500" fill="none" stroke="#b4b0ac" strokeWidth="6" strokeDasharray="3.200 3.380" />
    <circle cx="63" cy="71" r="28" fill="#484848" stroke="#a8a5a2" strokeWidth="6" />
    <path d="M63 71h28M63 71L49 47M63 71L49 95" stroke="#b0adaa" strokeWidth="6" /><circle cx="63" cy="71" r="5.500" fill="#9c9a98" />
  </Art>
);

const Terminal = () => (
  <Art>
    <rect x="13" y="26" width="101" height="89" rx="4" fill="#b8cfd0" /><rect x="14.500" y="28" width="98" height="86" rx="3" fill="#050505" /><rect x="19" y="33" width="88" height="75" fill="#262626" />
    <path d="M26 41l13 7.500-13 7.500" fill="none" stroke="#fff" strokeWidth="4" strokeLinejoin="bevel" /><path d="M42 57h14" stroke="#fff" strokeWidth="3.200" />
  </Art>
);

const Trash = () => (
  <Art>
    <defs><linearGradient id="tr" x1="0" y1="0" x2="1" y2="0"><stop offset="0" stopColor="#f1f1f2" /><stop offset=".3" stopColor="#cfcfd0" /><stop offset=".75" stopColor="#dededf" /><stop offset="1" stopColor="#f6f6f6" /></linearGradient></defs>
    <path d="M21 30c6-8 78-8 84 0l-10 88c-4 8-60 8-64 0z" fill="url(#tr)" />
    <ellipse cx="63" cy="32" rx="41" ry="10" fill="#aaaaad" stroke="#f2f2f2" strokeWidth="2" />
    <path d="M26 33l8-11 14-6 10 8 10-8 14 6 14 6 4 8-18 6-30 2-18-4z" fill="#e6e4e2" />
    <path d="M38 35l10-9 8 12zM66 36l6-14 12 6-4 12z" fill="#46424a" /><path d="M50 26l10-2 2 8-8 2z" fill="#3cc4c0" /><path d="M76 30l8 2-4 7z" fill="#c86a40" /><path d="M30 32l8-8 2 8z" fill="#666" /><path d="M88 28l8 6-8 2z" fill="#55585f" />
    <path d="M22 38c20 8 62 8 82 0" fill="none" stroke="#fff" opacity=".7" />
    <path d="M31 112c10 8 54 8 64 0l-1 7c-8 7-54 7-62 0z" fill="#fafafa" opacity=".8" />
  </Art>
);

const dock: { art: React.ReactNode; run?: boolean; badge?: string }[] = [
  { art: <Finder />, run: true }, { art: <Launchpad /> }, { art: <Siri /> }, { art: <Safari /> }, { art: <Calendar /> }, { art: <Maps /> },
  { art: <Photos /> }, { art: <Youdao /> }, { art: <PyCharm />, run: true }, { art: <Sublime /> }, { art: <Netease /> },
  { art: <QQ />, run: true, badge: "2" }, { art: <WeChat />, run: true, badge: "1" }, { art: <ChromeIcon />, run: true },
  { art: <AppStore /> }, { art: <Prefs />, badge: "1" }, { art: <Terminal />, run: true },
];

/* ---------- sections ---------- */

const SystemMenu = () => (
  <MenuBar>
    <MenuGroup $pad="0 0 0 40px">
      <StatusSlot $w={69}><FaApple size={32} /></StatusSlot>
      <MenuItem $w={145} $bold>Chrome</MenuItem>
      {menus.map(([t, w]) => <MenuItem key={t} $w={w}>{t}</MenuItem>)}
    </MenuGroup>
    <MenuGroup>
      <StatusSlot $w={52}><FaWeixin size={41} /></StatusSlot>
      <StatusSlot $w={34}>1</StatusSlot>
      <StatusSlot $w={67}>
        <svg width="34" height="34" viewBox="0 0 34 34" fill="#37232a"><path d="M5 33C9 24 11 12 11.500 1l5 5h8l5-5c1 11 2 21 3 32z" /><path d="M11 31.500c-6 1.500-9-1-9-4s3-4 4-3" fill="none" stroke="#37232a" strokeWidth="2" /></svg>
      </StatusSlot>
      <Speed $w={77}><span>3KB/s</span><span>1KB/s</span></Speed>
      <StatusSlot $w={34}>
        <svg width="28" height="34" viewBox="0 0 28 34"><path d="M14 0c-8 0-11 6-11 14-2 4-4 9-2.500 12 1 0 2-1 2.700-2 .5 3 2 5 3.500 6-2 1-3 2-2 3h18.600c1-1 0-2-2-3 1.500-1 3-3 3.500-6 .7 1 1.700 2 2.700 2C29 23 27 18 25 14 25 6 22 0 14 0z" /></svg>
      </StatusSlot>
      <StatusSlot $w={43}>2</StatusSlot>
      <Vertical $w={21}><span>M</span><span>E</span><span>M</span></Vertical>
      <StatusSlot $w={33}>
        <svg width="18" height="36" viewBox="0 0 18 36"><rect width="18" height="36" rx="3" fill="#1b1b1b" /><rect x="2" y="14" width="14" height="20" fill="#2484fb" /></svg>
      </StatusSlot>
      <StatusSlot $w={60}>
        <svg width="12" height="24" viewBox="0 0 12 24" fill="none" stroke="#000" strokeWidth="2"><path d="M1 10l9-8.500M3 1h8v7M11 13l-9 8.500M9 23H1v-8" /></svg>
      </StatusSlot>
      <Speed $w={80} $shadow><span>0 KB/s</span><span>0 KB/s</span></Speed>
      <Vertical $w={21}><span>S</span><span>E</span><span>N</span></Vertical>
      <StatusSlot $w={72} $size={27}>48°</StatusSlot>
      <StatusSlot $w={49}>
        <svg width="20" height="32" viewBox="0 0 20 32" fill="none" stroke="#37232a" strokeWidth="2"><path d="M1 8.500l17 15L10 30.500V1.500l8 7L1 23.500" /></svg>
      </StatusSlot>
      <StatusSlot $w={64}>
        <svg width="42" height="30" viewBox="0 0 42 30" fill="none" stroke="#37232a" strokeWidth="3"><path d="M1.500 10.500a28 28 0 0 1 39 0M8 17a19 19 0 0 1 26 0M14.500 22.500a9.500 9.500 0 0 1 13 0" /><path d="M21 29.500l-3.500-4a5 5 0 0 1 7 0z" fill="#37232a" stroke="none" /></svg>
      </StatusSlot>
      <StatusSlot $w={70} $size={25.5}>100%</StatusSlot>
      <StatusSlot $w={76}>
        <svg width="46" height="24" viewBox="0 0 46 24"><rect x="1" y="1" width="39" height="22" rx="4" fill="none" stroke="#37232a" strokeWidth="2" /><path d="M4 4h14l-8 9h6l-4 7H4zM27 4h10v16H22l9-10h-8z" fill="#37232a" /><path d="M21 4l-7 8h6l-4 9 10-10h-6l5-7z" fill="#37232a" /><path d="M43 8c3 1 3 7 0 8z" fill="#37232a" /></svg>
      </StatusSlot>
      <StatusSlot $w={66}><InputBadge>拼</InputBadge></StatusSlot>
      <StatusSlot $w={178} $size={28}>周日 15:40</StatusSlot>
      <StatusSlot $w={63}>
        <svg width="30" height="30" viewBox="0 0 30 30" fill="none" stroke="#2c2430" strokeWidth="2.600"><circle cx="11.500" cy="11.500" r="9.800" /><path d="M18.500 18.500l10 10" strokeWidth="3" /></svg>
      </StatusSlot>
      <StatusSlot $w={57}><SiriBall size={33} /></StatusSlot>
      <StatusSlot $w={82}>
        <svg width="37" height="22" viewBox="0 0 37 22" stroke="#241f2c" strokeWidth="3.600"><path d="M0 2h4M8 2h29M0 11h4M8 11h22M0 20h4M8 20h29" /></svg>
      </StatusSlot>
    </MenuGroup>
  </MenuBar>
);

const BrowserChrome = () => (
  <>
    <TabStrip>
      <Lights><Light $c="#fc605b" /><Light $c="#fdbc40" /><Light $c="#33c748" /></Lights>
      <Tab $w={481} $sep><TabIcon><Gear ring="#8b8d90" fill="#c4c4c4" /></TabIcon><TabTitle $digits>127.0.0.1</TabTitle><Cross s={18} /></Tab>
      <Tab $w={478} $sep>
        <TabIcon><svg width="24" height="24" viewBox="0 0 24 24" fill="none"><circle cx="12" cy="12" r="11" fill="#f3f5f7" /><path d="M4 20A11 11 0 0 1 3 5" stroke="#e4ccd6" strokeWidth="2" /><path d="M3 6a11 11 0 0 1 18 0" stroke="#f2304c" strokeWidth="2.400" /><path d="M21.500 16A11 11 0 0 1 5 21" stroke="#35c6f4" strokeWidth="2.400" /><text x="12" y="17" textAnchor="middle" fontSize="14" fontWeight="700" fill="#f05a3a" fontFamily="Roboto">S</text></svg></TabIcon>
        <TabTitle $fade>好消息，SimplePro发布正式版，</TabTitle><Cross s={18} />
      </Tab>
      <Tab $w={476}>
        <TabIcon><svg width="32" height="32" viewBox="0 0 32 32"><rect width="32" height="32" fill="#fff" /><ellipse cx="4.500" cy="16" rx="3.500" ry="5" fill="none" stroke="#63aef8" strokeWidth="1.400" /><circle cx="4.500" cy="16" r="1.500" fill="#63aef8" /><text x="9" y="19" fontSize="7" fontStyle="italic" fontWeight="700" fill="#5fa6f8" fontFamily="Roboto">Simple</text></svg></TabIcon>
        <TabTitle>快速上手指南 | Simple UI</TabTitle><Cross s={18} />
      </Tab>
      <Tab $w={480} $active><TabIcon><Gear ring="#c47a3c" fill="#fcc764" /></TabIcon><TabTitle>论坛后台管理</TabTitle><Cross s={18} /></Tab>
      <NewTab><svg width="24" height="24" viewBox="0 0 24 24" stroke="#3c4043" strokeWidth="3.400"><path d="M12 0v24M0 12h24" /></svg></NewTab>
    </TabStrip>
    <Toolbar>
      <NavButton $w={64}><svg width="28" height="26" viewBox="0 0 28 26" fill="none" stroke="#5f6368" strokeWidth="3"><path d="M14 1.500L2.500 13 14 24.500M2 13h25" /></svg></NavButton>
      <NavButton $w={64}><svg width="28" height="26" viewBox="0 0 28 26" fill="none" stroke="#bcbec1" strokeWidth="3"><path d="M14 1.500L25.500 13 14 24.500M26 13H1" /></svg></NavButton>
      <NavButton $w={59}><svg width="30" height="28" viewBox="0 0 30 28" fill="none" stroke="#5f6368" strokeWidth="3"><path d="M25.500 19A12 12 0 1 1 24 6.500" /><path d="M28 0v11H17z" fill="#5f6368" stroke="none" /></svg></NavButton>
      <Omnibox>
        <MdInfoOutline size={33} />
        <Url><b>127.0.0.1</b>:8000/admin/#/admin/bbs/post/</Url>
        <OmniActions><MdVpnKey size={31} /><MdStarBorder size={35} /></OmniActions>
      </Omnibox>
      <Avatar>H</Avatar>
      <svg width="32" height="32" viewBox="0 0 32 32"><circle cx="16" cy="16" r="16" fill="#1e8038" /><path d="M16 7l8 10h-4.500v7h-7v-7H8z" fill="#fff" /></svg>
    </Toolbar>
    <Bookmarks>
      <Bookmark $w={129}><BookmarkIcon $w={46}>{bookmarkIcons.apps}</BookmarkIcon>应用</Bookmark>
      <Bookmark $w={145}><BookmarkIcon $w={47}>{bookmarkIcons.gmail}</BookmarkIcon>Gmail</Bookmark>
      <Bookmark $w={174}><BookmarkIcon $w={46}>{bookmarkIcons.youtube}</BookmarkIcon>YouTube</Bookmark>
      <Bookmark $w={130}><BookmarkIcon $w={48}>{bookmarkIcons.maps}</BookmarkIcon>地图</Bookmark>
      <Bookmark $w={136}><BookmarkIcon $w={48}>{bookmarkIcons.translate}</BookmarkIcon>翻译</Bookmark>
      <Bookmark $w={302}><BookmarkIcon $w={41}>{bookmarkIcons.stack}</BookmarkIcon>macos-/ usr / loca...</Bookmark>
      <Bookmark $w={159}><BookmarkIcon $w={48}><FaGithub size={32} color="#15171a" /></BookmarkIcon>GitHub</Bookmark>
      <Bookmark $w={300}><BookmarkIcon $w={49}>{bookmarkIcons.bili}</BookmarkIcon>哔哩哔哩 (゜-゜)つ...</Bookmark>
    </Bookmarks>
  </>
);

const SideNav = () => (
  <Sidebar>
    <Brand><Logo /><span>论坛后台管理</span></Brand>
    <NavRow><NavIcon><FaHome size={40} /></NavIcon><NavLabel>首页</NavLabel></NavRow>
    <NavRow $fill><NavIcon><FaBlog size={37} /></NavIcon><NavLabel>帖子模型</NavLabel><NavArrow><Chevron up /></NavArrow></NavRow>
    <NavRow $sub><NavIcon><FaEthereum size={35} /></NavIcon><NavLabel>主题</NavLabel></NavRow>
    <NavRow $sub $fill $on><NavIcon><FaRegEnvelope size={36} /></NavIcon><NavLabel>帖子</NavLabel></NavRow>
    <NavRow $sub><NavIcon><FaThLarge size={37} /></NavIcon><NavLabel>版块</NavLabel></NavRow>
    <NavRow $sub><NavIcon><FaRegUser size={36} /></NavIcon><NavLabel>自定义用户</NavLabel></NavRow>
    <NavRow><NavIcon><FaRegCommentDots size={37} /></NavIcon><NavLabel>评论模型</NavLabel><NavArrow><Chevron /></NavArrow></NavRow>
    <NavRow><NavIcon><FaShieldAlt size={37} /></NavIcon><NavLabel>认证和授权</NavLabel><NavArrow><Chevron /></NavArrow></NavRow>
  </Sidebar>
);

const AdminContent = () => (
  <Content>
    <TopBar>
      <Crumbs>
        <Burger><FaBars size={28} /></Burger>
        <Crumb $w={118} $icon={9}><FaHome size={32} />首页</Crumb>
        <Slash $w={30}>/</Slash>
        <Crumb $w={162} $icon={9}><FaBlog size={29} />帖子模型</Crumb>
        <Slash $w={30}>/</Slash>
        <Crumb $w={110} $icon={8}><FaRegEnvelope size={29} />帖子</Crumb>
      </Crumbs>
      <Actions>
        <Action $w={104}><FaFont size={28} /></Action>
        <Action $w={104}><FaExpandArrowsAlt size={28} /></Action>
        <Action $w={140}><FaHome size={32} /></Action>
        <Action $w={314} $gap={14}>
          <FaPalette size={28} /><ThemeLabel>改变主题</ThemeLabel><Chevron />
        </Action>
        <Action $w={153} $gap={7}><FaUser size={28} /><UserName>admin</UserName><Chevron /></Action>
      </Actions>
    </TopBar>
    <PageTabs>
      <PageTab $w={188} $pad={40} $gap={19}><FaHome size={32} /><span>首页</span></PageTab>
      <PageTab $w={212} $pad={39} $gap={17}><FaRegUser size={28} /><span>用户</span><Cross s={16} w={1.8} /></PageTab>
      <PageTab $w={220} $pad={43} $gap={15}><FaEthereum size={28} /><span>主题</span><Cross s={16} w={1.8} /></PageTab>
      <PageTab $w={224} $pad={39} $gap={19} $active><FaRegEnvelope size={29} /><span>帖子</span><Cross s={16} w={1.8} /></PageTab>
    </PageTabs>
    <Scroller>
      <Viewport>
        <Card>
          <ActionRow>
            <Button $c="#469ffc" $w={186} $gap={20}>
              <svg width="24" height="24" viewBox="0 0 24 24" stroke="#fff" strokeWidth="2"><path d="M12 0v24M0 12h24" /></svg>增加
            </Button>
            <Button $c="#f46c6c" $w={178} $gap={11}>
              <svg width="26" height="26" viewBox="0 0 26 26" fill="none" stroke="#fff" strokeWidth="2"><path d="M1 5.500h24M9 5V1.500h8V5M4 6v19h18V6M10 11v9M16 11v9" /></svg>删除
            </Button>
            <Selected>选中了 100 个中的 0 个</Selected>
            <ButtonGroup>
              <span><svg width="22" height="22" viewBox="0 0 22 22" fill="none" stroke="currentColor" strokeWidth="1.800"><path d="M4 4.500A9.500 9.500 0 0 1 20.500 12M18 17.500A9.500 9.500 0 0 1 1.500 10M3 .5v5.500h5.500M19 21.500V16h-5.500" /></svg></span>
              <span><svg width="24" height="24" viewBox="0 0 24 24" fill="none" stroke="currentColor" strokeWidth="2"><path d="M12 3.500H4a2 2 0 0 0-2 2V20a2 2 0 0 0 2 2h15a2 2 0 0 0 2-2v-8" /><circle cx="18.500" cy="5.500" r="4.200" /></svg></span>
            </ButtonGroup>
          </ActionRow>
          <Table>
            <Row $head $bg="#f5f5f5">
              <Check /><Link>ID</Link><Link>版块</Link><Link>THEME</Link><span>CONTENT</span><Link>作者</Link><Link>创建时间</Link>
            </Row>
            {rows.map(([id, text], i) => (
              <Row key={id} $bg={id === 157 ? "#dbebfe" : i % 2 ? "#fafafa" : "#fff"}>
                <Check $focus={i === 0} /><Link>{id}</Link><span>学术交流</span><span>原创</span><span>{text}</span><span>admin</span><span>2020年3月18日 16:21</span>
              </Row>
            ))}
          </Table>
        </Card>
      </Viewport>
      <Track><Thumb /></Track>
    </Scroller>
  </Content>
);

export default function App() {
  return (
    <Desktop>
      <Global />
      <SystemMenu />
      <Window>
        <BrowserChrome />
        <Page><SideNav /><AdminContent /></Page>
        <Downloads>
          <Download $w={461} $pad={44}><Jpeg /><span>creative-design....jpg</span><Chevron up w={3} /></Download>
          <Download $w={454} $pad={37}><Jpeg /><span>man-enjoying-t....jpg</span><Chevron up w={3} /></Download>
          <ShowAll>显示全部</ShowAll>
          <CloseShelf><Cross s={20} w={2.400} /></CloseShelf>
        </Downloads>
      </Window>
      <Dock>
        {dock.map((d, i) => (
          <DockSlot key={i}>{d.art}{d.badge && <Badge>{d.badge}</Badge>}{d.run && <Running />}</DockSlot>
        ))}
        <Divider />
        <DockSlot $w={126}><Trash /></DockSlot>
      </Dock>
    </Desktop>
  );
}
